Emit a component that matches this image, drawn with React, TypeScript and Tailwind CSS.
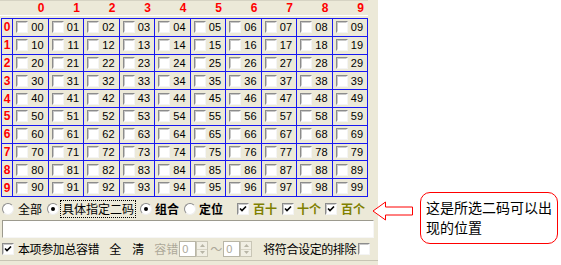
import React from 'react'

const digits = ['0', '1', '2', '3', '4', '5', '6', '7', '8', '9']
const cjk = { fontFamily: '"Noto Sans CJK SC", "Liberation Sans", sans-serif' }
const latin = { fontFamily: '"Liberation Sans", Arial, sans-serif' }

function CheckBox({ checked = false }: { checked?: boolean }) {
  return (
    <span className="relative inline-block w-[12px] h-[12px] shrink-0 bg-white border border-[#8c8c8c] border-b-[#f4f4f4] border-r-[#f4f4f4]">
      <span className="absolute inset-0 border border-[#c8c8c8] border-b-[#fff] border-r-[#fff]" />
      {checked && (
        <svg className="absolute left-[1px] top-[1px]" width="8" height="8" viewBox="0 0 8 8">
          <path d="M1 3.5 L3 5.5 L7 1.5" stroke="#000" strokeWidth="1.6" fill="none" />
        </svg>
      )}
    </span>
  )
}

function Radio({ checked = false }: { checked?: boolean }) {
  return (
    <span className="relative inline-block w-[12px] h-[12px] shrink-0 rounded-full bg-white border border-[#8c8c8c] border-b-[#eeeeee] border-r-[#eeeeee]">
      {checked && <span className="absolute left-[3px] top-[3px] w-[4px] h-[4px] rounded-full bg-black" />}
    </span>
  )
}

function Spin() {
  return (
    <span className="flex shrink-0 items-stretch h-[16px]">
      <span className="w-[17px] bg-white border border-[#b8b5a6] text-[11px] leading-[14px] pl-[2px] text-[#aca899]" style={latin}>
        0
      </span>
      <span className="flex flex-col w-[12px] border border-[#c9c6b6]">
        <span className="flex-1 flex items-center justify-center bg-[#f1efe4] border-b border-[#d8d5c6]">
          <svg width="5" height="3" viewBox="0 0 5 3"><path d="M0 3 L2.5 0 L5 3 Z" fill="#b8b5a6" /></svg>
        </span>
        <span className="flex-1 flex items-center justify-center bg-[#f1efe4]">
          <svg width="5" height="3" viewBox="0 0 5 3"><path d="M0 0 L2.5 3 L5 0 Z" fill="#b8b5a6" /></svg>
        </span>
      </span>
    </span>
  )
}

export default function App() {
  return (
    <div className="relative w-[561px] h-[265px] bg-white overflow-hidden flex">
      <div className="w-[378px] shrink-0 h-[265px] bg-[#ECE9D8] flex flex-col">
        {/* header row */}
        <div className="w-[368px] h-[16px] border-t border-[#d6d3c3] border-b border-b-white grid grid-cols-[13px_repeat(10,minmax(0,1fr))]">
          <span />
          {digits.map((d) => (
            <span key={d} className="text-right pr-[4px] text-[12px] leading-[14px] font-bold text-[#ff0000]" style={latin}>
              {d}
            </span>
          ))}
        </div>

        {/* number grid */}
        <div className="mt-[2px] ml-px w-[367px] h-[179px] bg-[#1818f0] border border-[#1818f0] grid grid-cols-[10px_repeat(10,minmax(0,1fr))] grid-rows-[repeat(10,minmax(0,1fr))] gap-px">
          {digits.map((r) => (
            <React.Fragment key={r}>
              <span className="bg-[#ECE9D8] flex items-center justify-center text-[12px] font-bold text-[#ff0000]" style={latin}>
                {r}
              </span>
              {digits.map((c) => (
                <span key={c} className="bg-[#ECE9D8] flex items-center justify-between pl-[3px] pr-[4px]">
                  <CheckBox />
                  <span className="text-[11px] text-black" style={latin}>
                    {r}
                    {c}
                  </span>
                </span>
              ))}
            </React.Fragment>
          ))}
        </div>

        {/* mode row */}
        <div className="h-[23px] flex items-center whitespace-nowrap pl-[2px] text-[12px] text-black" style={cjk}>
          <Radio />
          <span className="ml-[4px]">全部</span>
          <span className="ml-[5px] flex"><Radio checked /></span>
          <span className="ml-[1px] border border-dotted border-black px-[1px] leading-[16px]">具体指定二码</span>
          <span className="ml-[4px] flex"><Radio checked /></span>
          <span className="ml-[3px] font-bold">组合</span>
          <span className="ml-[5px] flex"><Radio /></span>
          <span className="ml-[3px] font-bold">定位</span>
          <span className="ml-[14px] flex"><CheckBox checked /></span>
          <span className="ml-[4px] font-bold text-[#808000]">百十</span>
          <span className="ml-[5px] flex"><CheckBox checked /></span>
          <span className="ml-[3px] font-bold text-[#808000]">十个</span>
          <span className="ml-[4px] flex"><CheckBox checked /></span>
          <span className="ml-[4px] font-bold text-[#808000]">百个</span>
        </div>

        {/* text input */}
        <div className="ml-[2px] w-[372px] h-[18px] shrink-0 bg-white border border-[#9c9a8e] border-b-[#f6f6f6] border-r-[#f6f6f6]" />

        {/* options row */}
        <div className="h-[23px] flex items-center whitespace-nowrap pl-[2px] text-[12px] text-black border-b border-[#c8c5b4]" style={cjk}>
          <CheckBox checked />
          <span className="ml-[4px] tracking-[-0.4px]">本项参加总容错</span>
          <span className="ml-[10px]">全</span>
          <span className="ml-[11px]">清</span>
          <span className="ml-[10px] text-[#aca899]">容错</span>
          <span className="ml-[1px] flex"><Spin /></span>
          <span className="ml-[2px] text-[#aca899]">～</span>
          <span className="ml-[1px] flex"><Spin /></span>
          <span className="ml-[11px] tracking-[-0.4px]">将符合设定的排除</span>
          <span className="ml-[2px] flex"><CheckBox /></span>
        </div>
      </div>

      {/* annotation */}
      <svg className="absolute left-[370px] top-[198px]" width="46" height="26" viewBox="0 0 46 26">
        <path d="M3 13 L15.5 4 L15.5 9 L42.5 9 L42.5 17 L15.5 17 L15.5 22 Z" fill="#fff" stroke="#ff0000" strokeWidth="1" />
      </svg>
      <div
        className="absolute left-[420px] top-[192px] w-[138px] h-[52px] rounded-[10px] border border-[#ff0000] bg-white pl-[5px] pt-[4px] text-[14px] leading-[20px] text-black"
        style={cjk}
      >
        这是所选二码可以出
        <br />
        现的位置
      </div>
    </div>
  )
}
